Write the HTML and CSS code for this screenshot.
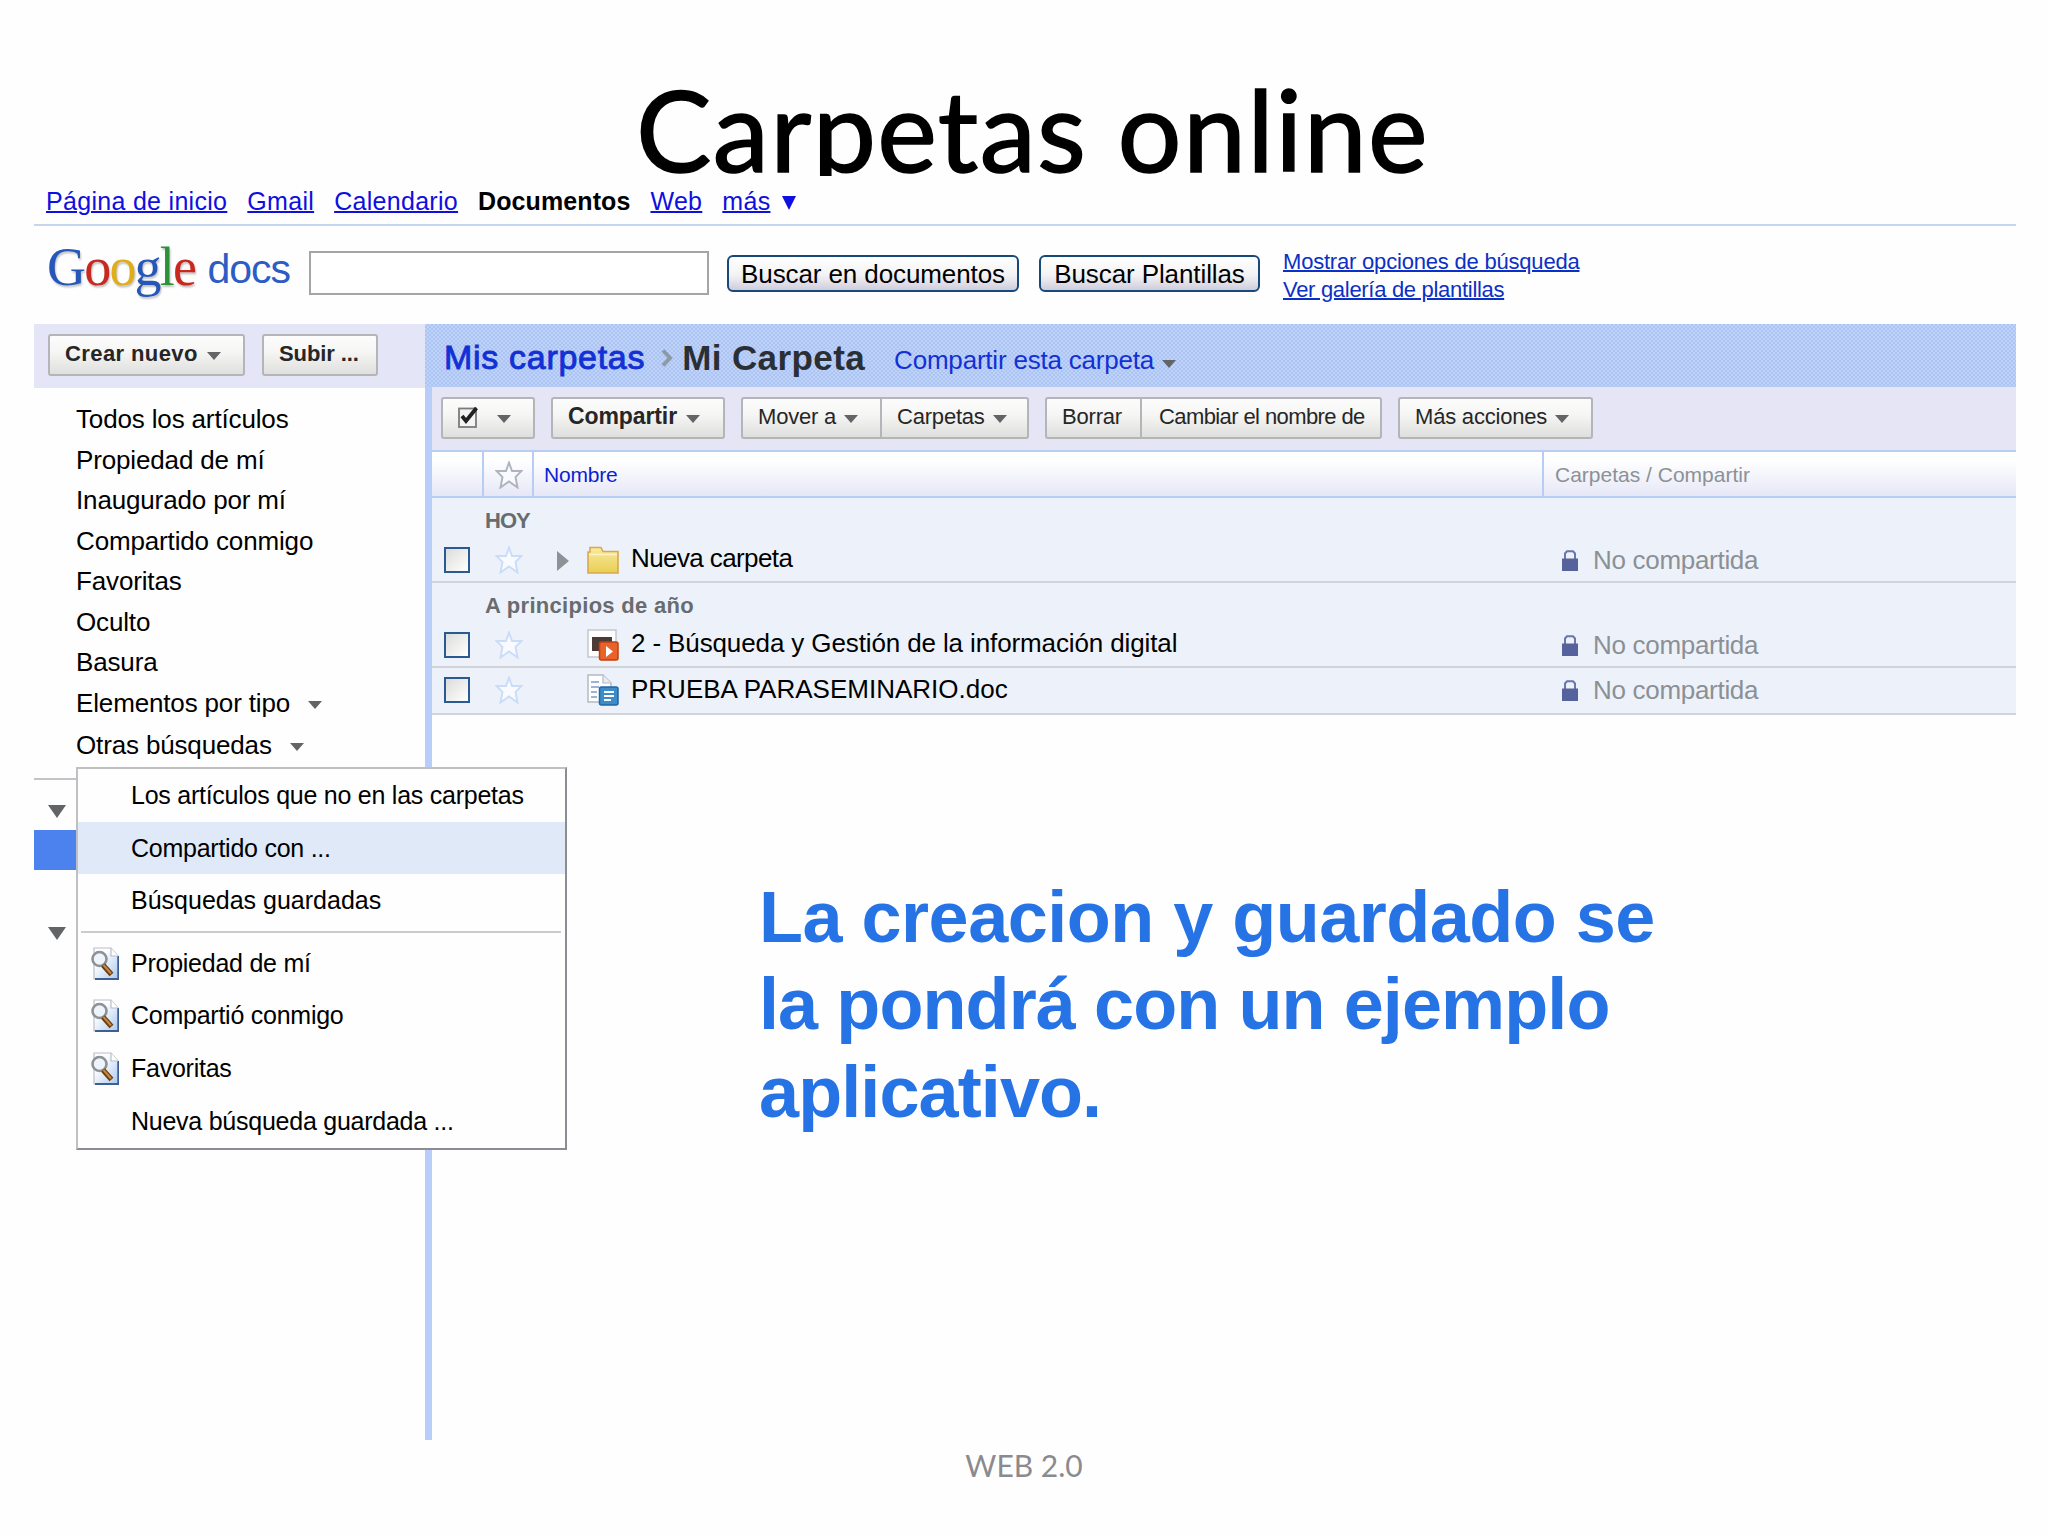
FILE: index.html
```html
<!DOCTYPE html>
<html lang="es">
  <head>
    <meta charset="UTF-8" />
    <title>Carpetas online</title>
    <link rel="stylesheet" href="styles.css">
  </head>
  <body>
    <!-- Shared icons -->
    <svg class="sprite" width="0" height="0">
      <defs>
        <linearGradient id="pageFill" x1="0" y1="0" x2="1" y2="1">
          <stop offset="0.3" stop-color="#ffffff" />
          <stop offset="1" stop-color="#a9c8f0" />
        </linearGradient>
        <linearGradient id="folderFill" x1="0" y1="0" x2="0" y2="1">
          <stop offset="0" stop-color="#fbe9a0" />
          <stop offset="1" stop-color="#e8cf52" />
        </linearGradient>
      </defs>
      <symbol id="star" viewBox="0 0 28 28">
        <path d="M14 1.5 L17 10 L26.5 10 L20.500 16 L22.5 26.500 L14 20.500 L5.500 26.500 L7.500 16 L1.500 10 L11 10 Z" fill="#f8fafe" stroke="currentColor" stroke-width="1.900" />
      </symbol>
      <symbol id="lock" viewBox="0 0 16 21">
        <path d="M3 10 V3.500 L5 1.300 H11 L13 3.500 V10" fill="none" stroke="#6a76ae" stroke-width="2" />
        <rect x="0" y="8.500" width="16" height="12.500" fill="#56629c" />
      </symbol>
      <symbol id="search" viewBox="0 0 28 33">
        <path d="M3 1 H20 L27 9 V32 H3 Z" fill="url(#pageFill)" stroke="#b9bec8" stroke-width="1.200" />
        <path d="M27.200 9 V32 H4" fill="none" stroke="#3f5f92" stroke-width="1.800" />
        <path d="M20 1 V9 H27" fill="#fff" stroke="#b9bec8" stroke-width="1.200" />
        <circle cx="8.500" cy="12" r="7" fill="#eef4fb" stroke="#8e9196" stroke-width="2.600" />
        <path d="M12 18 L20.500 27.500" stroke="#6b3d12" stroke-width="5.200" />
        <path d="M12.500 18 L20 26.500" stroke="#c98a3e" stroke-width="2" />
      </symbol>
    </svg>

    <h1 class="title">Carpetas online</h1>

    <div class="docs">
      <div class="topnav">
        <a href="#">Página de inicio</a>
        <a href="#">Gmail</a>
        <a href="#">Calendario</a>
        <b>Documentos</b>
        <a href="#">Web</a>
        <a href="#">más</a>
        <i class="more"></i>
      </div>

      <div class="search">
        <div class="logo">
          <span class="google"><span class="b">G</span><span class="r">o</span><span class="y">o</span><span class="b">g</span><span class="g">l</span><span class="r">e</span></span>
          <span class="product">docs</span>
        </div>
        <input type="text" class="query" />
        <button class="xp">Buscar en documentos</button>
        <button class="xp xp-second">Buscar Plantillas</button>
        <div class="search-links">
          <a href="#">Mostrar opciones de búsqueda</a>
          <a href="#" class="tight">Ver galería de plantillas</a>
        </div>
      </div>

      <div class="content">
        <div class="sidebar">
          <div class="sidebar-top">
            <button class="btn bold create">Crear nuevo <i class="arrow"></i></button>
            <button class="btn bold upload">Subir ...</button>
          </div>
          <ul class="filters">
            <li>Todos los artículos</li>
            <li>Propiedad de mí</li>
            <li>Inaugurado por mí</li>
            <li>Compartido conmigo</li>
            <li>Favoritas</li>
            <li>Oculto</li>
            <li>Basura</li>
            <li>Elementos por tipo <i class="arrow"></i></li>
            <li class="open">Otras búsquedas <i class="arrow"></i></li>
          </ul>
          <div class="tree">
            <div class="tree-row"><i class="arrow big"></i></div>
            <div class="tree-selected"></div>
            <div class="tree-row second"><i class="arrow big"></i></div>
          </div>
        </div>

        <div class="main">
          <div class="crumbs">
            <a class="crumb-root">Mis carpetas</a>
            <svg class="chevron" width="12" height="18" viewBox="0 0 12 18"><path d="M2 1.500 L9 9 L2 16.500" fill="none" stroke="#8b9aa4" stroke-width="4" /></svg>
            <b>Mi Carpeta</b>
            <a class="share">Compartir esta carpeta</a>
            <i class="arrow"></i>
          </div>

          <div class="toolbar">
            <button class="btn select">
              <svg width="21" height="22" viewBox="0 0 21 22"><rect x="1" y="2.500" width="17" height="18.500" fill="#f4f4f4" stroke="#7b7b7b" stroke-width="1.800" /><path d="M4 10 L8 15 L18.500 2" fill="none" stroke="#222" stroke-width="3.800" /></svg>
              <i class="arrow"></i>
            </button>
            <button class="btn bold share-btn">Compartir <i class="arrow"></i></button>
            <div class="group">
              <button class="btn move">Mover a <i class="arrow"></i></button>
              <button class="btn folders">Carpetas <i class="arrow"></i></button>
            </div>
            <div class="group">
              <button class="btn delete">Borrar</button>
              <button class="btn rename">Cambiar el nombre de</button>
            </div>
            <button class="btn actions">Más acciones <i class="arrow"></i></button>
          </div>

          <div class="row head">
            <div></div>
            <div class="cell-star"><svg class="star"><use href="#star" /></svg></div>
            <div class="head-name">Nombre</div>
            <div class="head-share">Carpetas / Compartir</div>
          </div>

          <div class="list">
            <div class="label hoy">HOY</div>
            <div class="row item">
              <div class="cell-check"><span class="check"></span></div>
              <div class="cell-star"><svg class="star"><use href="#star" /></svg></div>
              <div class="cell-name">
                <i class="expand"></i>
                <svg width="32" height="28" viewBox="0 0 32 28"><path d="M1 27 V6 H3 V1.500 H14 L16 5.500 H31 V27 Z" fill="url(#folderFill)" stroke="#d9a94e" stroke-width="1.600" /><path d="M2 8.500 H30" stroke="#fff3c0" stroke-width="1.500" /></svg>
                <span class="name folder">Nueva carpeta</span>
              </div>
              <div class="cell-share"><svg class="lock"><use href="#lock" /></svg>No compartida</div>
            </div>

            <div class="label">A principios de año</div>
            <div class="row item">
              <div class="cell-check"><span class="check"></span></div>
              <div class="cell-star"><svg class="star"><use href="#star" /></svg></div>
              <div class="cell-name">
                <i class="expand none"></i>
                <svg width="32" height="32" viewBox="0 0 32 32"><rect x="1" y="1" width="28" height="27" fill="#fff" stroke="#c3c7ce" stroke-width="1.500" /><rect x="5" y="8" width="20" height="14" fill="#4b3a36" /><rect x="12.500" y="13" width="18.500" height="18" rx="2" fill="#e8622a" stroke="#c0400f" stroke-width="1.500" /><path d="M19 17 V28 L26 22.500 Z" fill="#fff" /></svg>
                <span class="name">2 - Búsqueda y Gestión de la información digital</span>
              </div>
              <div class="cell-share"><svg class="lock"><use href="#lock" /></svg>No compartida</div>
            </div>
            <div class="row item last">
              <div class="cell-check"><span class="check"></span></div>
              <div class="cell-star"><svg class="star"><use href="#star" /></svg></div>
              <div class="cell-name">
                <i class="expand none"></i>
                <svg width="32" height="32" viewBox="0 0 32 32"><path d="M1 1 H16 L24 9 V28 H1 Z" fill="#fff" stroke="#b3bac4" stroke-width="1.500" /><path d="M16 1 V9 H24" fill="#e8edf4" stroke="#b3bac4" stroke-width="1.200" /><path d="M4 8 H12 M4 13 H12 M4 18 H10 M4 23 H10" stroke="#9db4d2" stroke-width="1.800" /><rect x="12.500" y="13" width="18.500" height="18" rx="2" fill="#3d8cc9" stroke="#1f66a5" stroke-width="1.500" /><path d="M17 18 H27 M17 22 H27 M17 26 H24" stroke="#fff" stroke-width="2" /></svg>
                <span class="name doc">PRUEBA PARASEMINARIO.doc</span>
              </div>
              <div class="cell-share"><svg class="lock"><use href="#lock" /></svg>No compartida</div>
            </div>
          </div>

          <p class="note">La creacion y guardado se<br><span>la pondrá con un ejemplo<br>aplicativo.</span></p>
        </div>
      </div>

      <!-- Dropdown of "Otras búsquedas" -->
      <ul class="menu">
        <li>Los artículos que no en las carpetas</li>
        <li class="hover">Compartido con ...</li>
        <li class="wide">Búsquedas guardadas</li>
        <li class="separator"></li>
        <li><svg class="search-icon"><use href="#search" /></svg>Propiedad de mí</li>
        <li><svg class="search-icon"><use href="#search" /></svg>Compartió conmigo</li>
        <li><svg class="search-icon"><use href="#search" /></svg>Favoritas</li>
        <li>Nueva búsqueda guardada ...</li>
      </ul>
    </div>

    <div class="footer">WEB 2.0</div>
  </body>
</html>
```
FILE: styles.css
```css
* {
  box-sizing: border-box;
}

body {
  margin: 0;
  width: 2048px;
  height: 1536px;
  overflow: hidden;
  background-color: #fefefe;
  font-family: "Liberation Sans", Arial, sans-serif;
  font-size: 26px;
  color: #000;
}

ul {
  list-style: none;
  margin: 0;
  padding: 0;
}

button {
  font-family: inherit;
  margin: 0;
}

.sprite {
  display: block;
}

/* Slide title, its descenders end where the docs page starts */
.title {
  height: 176px;
  margin: 0;
  padding-left: 17px;
  overflow: hidden;
  text-align: center;
  font: 400 113px/256px Lato, sans-serif;
  letter-spacing: 1.3px;
  -webkit-text-stroke: 1.5px #000;
}

.docs {
  position: relative;
  width: 1982px;
  height: 1264px;
  margin-left: 34px;
}

.topnav {
  display: flex;
  gap: 20px;
  height: 50px;
  padding-left: 12px;
  border-bottom: 2px solid #c6d5f0;
  font-size: 25px;
  line-height: 50px;
  letter-spacing: 0.3px;
  white-space: nowrap;
}

.topnav a {
  color: #0f0fe0;
  text-decoration-thickness: 2px;
}

.topnav b {
  letter-spacing: 0.1px;
}

.more {
  margin: 20px 0 0 -8px;
  width: 0;
  height: 0;
  border: 7px solid transparent;
  border-top: 14px solid #0f0fe0;
  border-bottom: 0;
}

.search {
  display: flex;
  align-items: center;
  height: 98px;
  padding: 0 0 4px 13px;
}

.logo {
  width: 262px;
  margin-bottom: 12px;
  white-space: nowrap;
}

.google {
  font: 54px "Liberation Serif", serif;
  letter-spacing: -1.8px;
  text-shadow: 1px 2px 2px #c0c0c0;
}

.google .b { color: #2556b8; }
.google .r { color: #c8281e; }
.google .y { color: #e0ad1c; }
.google .g { color: #2c9138; }

.product {
  position: relative;
  top: -2px;
  margin-left: 5px;
  font-size: 41px;
  letter-spacing: -1px;
  color: #2c5cc4;
}

.query {
  width: 400px;
  height: 44px;
  padding: 0;
  border: 2px solid #a5a5a5;
}

.xp {
  width: 292px;
  height: 37px;
  margin-left: 18px;
  padding: 0;
  border: 2px solid #174a78;
  border-radius: 6px;
  background: linear-gradient(#fff 0%, #f3f3f5 55%, #cfcddd 100%);
  font-size: 26px;
  line-height: 35px;
  letter-spacing: -0.1px;
  white-space: nowrap;
}

.xp-second {
  width: 221px;
  margin-left: 20px;
}

.search-links {
  display: flex;
  flex-direction: column;
  margin: 5px 0 0 23px;
  font-size: 22px;
  line-height: 28px;
  letter-spacing: -0.2px;
}

.search-links a {
  color: #0c30c4;
  text-decoration-thickness: 2px;
}

.search-links .tight {
  letter-spacing: -0.3px;
}

.content {
  display: flex;
  height: 1116px;
}

.sidebar {
  width: 391px;
}

.sidebar-top {
  display: flex;
  gap: 17px;
  height: 64px;
  padding: 10px 0 0 14px;
  background-color: #e4e6f7;
}

.btn {
  display: flex;
  align-items: center;
  gap: 8px;
  height: 42px;
  padding: 0 0 3px 15px;
  border: 2px solid #b4b5b9;
  border-radius: 3px;
  background: linear-gradient(#fbfcfb 0%, #f6f6f5 40%, #dfdfde 100%);
  font-size: 22px;
  letter-spacing: -0.2px;
  white-space: nowrap;
  color: #262626;
}

.bold {
  font-weight: bold;
}

.arrow {
  display: inline-block;
  width: 0;
  height: 0;
  border: 7px solid transparent;
  border-top: 8px solid #626466;
  border-bottom: 0;
}

.btn .arrow {
  margin-top: 5px;
}

.create {
  width: 197px;
  gap: 9px;
  font-size: 22px;
  letter-spacing: 0.4px;
}

.upload {
  width: 116px;
  font-size: 22px;
  letter-spacing: -0.1px;
}

.filters {
  padding: 11px 0 0 42px;
  line-height: 40.5px;
  letter-spacing: -0.15px;
}

.filters .arrow {
  margin: 0 0 3px 11px;
}

.filters .open {
  padding-top: 2px;
}

.tree {
  margin-top: 12px;
  border-top: 2px solid #c4c4c8;
}

.tree-row {
  height: 50px;
  padding: 25px 0 0 14px;
  line-height: 0;
}

.tree-selected {
  height: 40px;
  background-color: #4b82ed;
}

.tree-row.second {
  padding-top: 57px;
}

.arrow.big {
  border-width: 13px 9px 0;
}

.main {
  flex: 1;
  border-left: 7px solid #b9cdf9;
}

.crumbs {
  display: flex;
  align-items: center;
  height: 63px;
  margin-left: -7px;
  padding: 4px 0 0 19px;
  background: repeating-conic-gradient(#acc4f0 0 25%, #bfd2fc 0 50%) 0 0 / 4px 4px;
  font-size: 34px;
  white-space: nowrap;
}

.crumb-root {
  color: #1230d4;
  letter-spacing: 0.7px;
  -webkit-text-stroke: 0.9px #1230d4;
}

.chevron {
  margin: 0 9px 0 16px;
}

.crumbs b {
  font-size: 35px;
  letter-spacing: 0.4px;
  color: #2a2f36;
}

.share {
  margin: 6px 8px 0 29px;
  font-size: 26px;
  letter-spacing: -0.2px;
  color: #1230d4;
}

.crumbs .arrow {
  margin-top: 12px;
}

.toolbar {
  display: flex;
  height: 63px;
  padding: 10px 0 0 9px;
  background-color: #e5e5f6;
}

.toolbar > * {
  margin-right: 16px;
}

.group {
  display: flex;
}

.group .btn:first-child {
  border-right: 0;
  border-radius: 3px 0 0 3px;
}

.group .btn:last-child {
  border-radius: 0 3px 3px 0;
}

.select {
  width: 94px;
  gap: 18px;
}

.share-btn {
  width: 174px;
  gap: 9px;
  font-size: 23px;
  letter-spacing: -0.1px;
}

.move { width: 139px; }
.folders { width: 149px; }
.delete { width: 95px; }
.rename { width: 242px; padding-left: 17px; letter-spacing: -0.6px; }
.actions { width: 195px; }

.row {
  display: grid;
  grid-template-columns: 50px 50px 1010px 1fr;
}

.head {
  height: 48px;
  border-top: 2px solid #b7cdf3;
  border-bottom: 2px solid #b7cdf3;
  background: linear-gradient(#ffffff 20%, #e5e7f7 100%);
  font-size: 21px;
  line-height: 45px;
}

.head > div + div {
  border-left: 2px solid #b7cdf3;
}

.head-name {
  padding-left: 10px;
  letter-spacing: -0.2px;
  color: #0c1fd0;
}

.head-share {
  padding-left: 11px;
  color: #8c9196;
}

.cell-star,
.cell-check,
.cell-name,
.cell-share {
  display: flex;
  align-items: center;
}

.star {
  width: 28px;
  height: 28px;
  margin-left: 13px;
  color: #c9dcf8;
}

.head .star {
  margin-left: 11px;
  color: #aeb3bd;
}

.item .star,
.check {
  margin-bottom: 2px;
}

.list {
  background-color: #edf2fa;
}

.label {
  height: 42px;
  padding: 4px 0 0 53px;
  font-size: 22px;
  font-weight: bold;
  line-height: 37px;
  letter-spacing: 0.3px;
  color: #686c70;
}

.hoy {
  letter-spacing: -1px;
}

.item {
  height: 43px;
  border-bottom: 2px solid #d1d5da;
}

.last {
  height: 47px;
}

.check {
  width: 26px;
  height: 26px;
  margin-left: 12px;
  border: 2px solid #2a5a94;
  background: linear-gradient(135deg, #dcdcd8, #ffffff);
}

.cell-name {
  padding-left: 25px;
  white-space: nowrap;
}

.cell-name svg {
  margin-bottom: 1px;
}

.expand {
  margin-right: 18px;
  border: 10px solid transparent;
  border-left: 12px solid #8e9195;
  border-right: 0;
}

.expand.none {
  visibility: hidden;
}

.name {
  margin-left: 12px;
  padding-bottom: 4px;
  letter-spacing: -0.12px;
}

.folder {
  letter-spacing: -0.6px;
}

.doc {
  padding-bottom: 2px;
  letter-spacing: 0;
}

.cell-share {
  padding: 0 0 1px 20px;
  letter-spacing: -0.3px;
  color: #8b9096;
}

.last .cell-share {
  padding-bottom: 0;
}

.lock {
  width: 16px;
  height: 21px;
  margin-right: 15px;
}

.note {
  margin: 159px 0 0 327px;
  font-size: 72px;
  font-weight: bold;
  line-height: 87.3px;
  letter-spacing: -0.5px;
  color: #2673e6;
}

.note span {
  letter-spacing: -0.9px;
}

.menu {
  position: absolute;
  left: 42px;
  top: 591px;
  width: 491px;
  height: 383px;
  border: 2px solid #bfc0c4;
  border-right-color: #8c8d92;
  border-bottom-color: #8c8d92;
  background-color: #fefefe;
  font-size: 25px;
  line-height: 52.6px;
  letter-spacing: -0.25px;
  white-space: nowrap;
}

.menu li {
  display: flex;
  align-items: center;
  height: 52.6px;
  padding-left: 53px;
}

.menu .hover {
  background-color: #dfe9f7;
}

.menu .wide {
  letter-spacing: 0;
}

.menu .separator {
  height: 2px;
  margin: 4px 4px 4px 3px;
  background-color: #cccacd;
}

.search-icon {
  width: 28px;
  height: 33px;
  margin: 0 12px 0 -40px;
}

.footer {
  margin-top: 5px;
  text-align: center;
  font: 30px/40px Lato, sans-serif;
  color: #8b8b8f;
}
```
